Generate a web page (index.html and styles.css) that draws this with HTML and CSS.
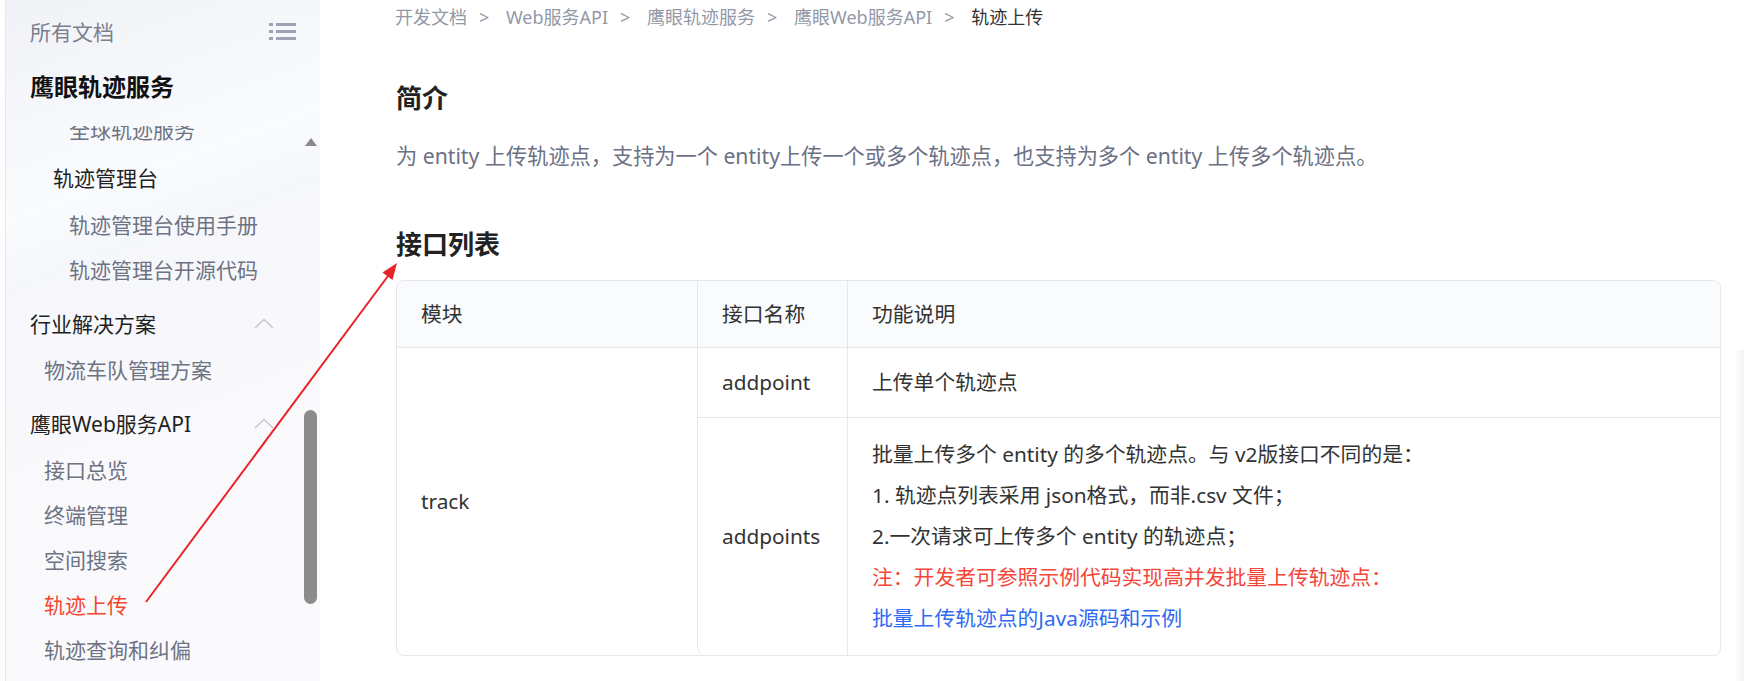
FILE: index.html
```html
<!DOCTYPE html>
<html lang="zh-CN">
<head>
    <meta charset="UTF-8">
    <meta name="viewport" content="width=device-width, initial-scale=1.0">
    <title>轨迹上传 - 鹰眼轨迹服务</title>
    <link rel="stylesheet" href="styles.css">
</head>
<body>

    <div class="page">
        <!-- Left: document tree -->
        <aside class="sidebar">
            <div class="side-head">
                <span>所有文档</span>
                <svg class="list-icon" width="27" height="19" viewBox="0 0 27 19" fill="currentColor">
                    <rect x="0" y="1" width="4" height="3"></rect>
                    <rect x="7" y="1" width="20" height="3"></rect>
                    <rect x="0" y="8" width="4" height="3"></rect>
                    <rect x="7" y="8" width="20" height="3"></rect>
                    <rect x="0" y="15" width="4" height="3"></rect>
                    <rect x="7" y="15" width="20" height="3"></rect>
                </svg>
            </div>
            <div class="side-title">鹰眼轨迹服务</div>

            <div class="side-scroll">
                <ul class="side-list">
                    <li class="leaf deep">全球轨迹服务</li>
                    <li class="sub-title">轨迹管理台</li>
                    <li class="leaf deep">轨迹管理台使用手册</li>
                    <li class="leaf deep">轨迹管理台开源代码</li>
                    <li class="group">
                        <span>行业解决方案</span>
                        <svg class="chevron" width="20" height="11" viewBox="0 0 20 11" fill="none" stroke="currentColor" stroke-width="1.4">
                            <polyline points="1,10 10,1.5 19,10"></polyline>
                        </svg>
                    </li>
                    <li class="leaf">物流车队管理方案</li>
                    <li class="group">
                        <span>鹰眼Web服务API</span>
                        <svg class="chevron" width="20" height="11" viewBox="0 0 20 11" fill="none" stroke="currentColor" stroke-width="1.4">
                            <polyline points="1,10 10,1.5 19,10"></polyline>
                        </svg>
                    </li>
                    <li class="leaf">接口总览</li>
                    <li class="leaf">终端管理</li>
                    <li class="leaf">空间搜索</li>
                    <li class="leaf active">轨迹上传</li>
                    <li class="leaf">轨迹查询和纠偏</li>
                </ul>

                <!-- scrollbar drawn over the list -->
                <span class="scroll-up"></span>
                <span class="scroll-thumb"></span>
            </div>
        </aside>

        <!-- Right: article -->
        <main class="content">
            <nav class="crumbs">
                <a>开发文档</a><span class="sep">&gt;</span>
                <a>Web服务API</a><span class="sep">&gt;</span>
                <a>鹰眼轨迹服务</a><span class="sep">&gt;</span>
                <a>鹰眼Web服务API</a><span class="sep">&gt;</span>
                <span class="current">轨迹上传</span>
            </nav>

            <h2 class="intro-title">简介</h2>
            <p class="intro">为 entity 上传轨迹点，支持为一个 entity上传一个或多个轨迹点，也支持为多个 entity 上传多个轨迹点。</p>

            <h2 class="list-title">接口列表</h2>
            <table class="api-table">
                <thead>
                    <tr>
                        <th class="col-module">模块</th>
                        <th class="col-name">接口名称</th>
                        <th>功能说明</th>
                    </tr>
                </thead>
                <tbody>
                    <tr>
                        <td class="module" rowspan="2">track</td>
                        <td>addpoint</td>
                        <td>上传单个轨迹点</td>
                    </tr>
                    <tr>
                        <td class="first-in-row">addpoints</td>
                        <td class="desc">
                            <p>批量上传多个 entity 的多个轨迹点。与 v2版接口不同的是：</p>
                            <p>1. 轨迹点列表采用 json格式，而非.csv 文件；</p>
                            <p>2.一次请求可上传多个 entity 的轨迹点；</p>
                            <p class="note">注：开发者可参照示例代码实现高并发批量上传轨迹点：</p>
                            <p><a class="link">批量上传轨迹点的Java源码和示例</a></p>
                        </td>
                    </tr>
                </tbody>
            </table>
        </main>
    </div>

    <!-- red annotation arrow drawn on top of the screenshot -->
    <svg class="annot" width="1744" height="681" viewBox="0 0 1744 681">
        <line x1="146" y1="602" x2="388" y2="276" stroke="#e8232b" stroke-width="2"></line>
        <polygon points="397,263 392.5,280 382.5,272.5" fill="#e8232b"></polygon>
    </svg>

</body>
</html>
```

FILE: styles.css
```css
* {
    margin: 0;
    padding: 0;
    box-sizing: border-box;
}

body {
    width: 1744px;
    height: 681px;
    overflow: hidden;
    background-color: #ffffff;
    font-family: "Noto Sans", "Noto Sans CJK SC", sans-serif;
    color: #333333;
    position: relative;
}

body::after {
    content: "";
    position: absolute;
    right: 0;
    top: 350px;
    bottom: 0;
    width: 10px;
    background: linear-gradient(to right, #ffffff, #f2f2f4);
}

.page {
    display: flex;
    height: 100%;
}

/* ---------- sidebar ---------- */

.sidebar {
    width: 315px;
    margin-left: 5px;
    border-left: 1px solid #e6e6ec;
    background: linear-gradient(160deg, #f1f2f7 0%, #fafbfd 28%, #f6f7fb 36%, #f9f9fc 60%, #fafafd 100%);
    display: flex;
    flex-direction: column;
    flex-shrink: 0;
}

.side-head {
    height: 62px;
    display: flex;
    align-items: center;
    justify-content: space-between;
    padding: 0 24px 0 24px;
    font-size: 21px;
    color: #7b8090;
}

.list-icon {
    color: #9ea3b4;
}

.side-title {
    margin-top: 7px;
    padding-left: 24px;
    font-size: 24px;
    line-height: 36px;
    font-weight: bold;
    color: #111111;
}

.side-scroll {
    flex: 1;
    margin-top: 21px;
    overflow: hidden;
    position: relative;
}

.side-list {
    list-style: none;
    margin-top: -18px;
    font-size: 21px;
}

.leaf {
    height: 45px;
    line-height: 45px;
    padding-left: 38px;
    color: #6e7383;
}

.leaf.deep {
    padding-left: 63px;
}

.leaf.active {
    color: #f5452f;
}

.sub-title {
    height: 50px;
    line-height: 50px;
    padding-left: 47px;
    color: #222222;
}

.group {
    height: 50px;
    margin-top: 5px;
    display: flex;
    align-items: center;
    justify-content: space-between;
    padding: 0 46px 0 24px;
    color: #1f1f1f;
}

.chevron {
    color: #c2c6d0;
}

.scroll-up {
    position: absolute;
    top: 12px;
    right: 3px;
    width: 0;
    height: 0;
    border-left: 6.5px solid transparent;
    border-right: 6.5px solid transparent;
    border-bottom: 8px solid #8a8a8a;
}

.scroll-thumb {
    position: absolute;
    top: 284px;
    right: 3px;
    width: 13px;
    height: 194px;
    border-radius: 7px;
    background-color: #8c8c8c;
}

/* ---------- content ---------- */

.content {
    flex: 1;
    padding: 0 23px 0 75px;
}

.crumbs {
    height: 34px;
    line-height: 34px;
    font-size: 18px;
    color: #9398a7;
    white-space: nowrap;
}

.crumbs .sep {
    margin: 0 12px;
}

.crumbs .current {
    color: #333333;
}

.intro-title,
.list-title {
    font-size: 26px;
    line-height: 36px;
    font-weight: bold;
    color: #222222;
    padding-left: 1px;
}

.intro-title {
    margin-top: 46px;
}

.intro {
    margin-top: 22px;
    padding-left: 1px;
    font-size: 21.2px;
    line-height: 36px;
    color: #6b7083;
}

.list-title {
    margin-top: 52px;
}

.api-table {
    margin-top: 18px;
    margin-left: 1px;
    width: 1325px;
    border-collapse: separate;
    border-spacing: 0;
    border: 1px solid #e6e7ec;
    border-radius: 8px;
    font-size: 20.8px;
    color: #333333;
    text-align: left;
}

.api-table th {
    font-weight: normal;
    background-color: #fafbfd;
    padding: 12px 24px;
    line-height: 42px;
    border-bottom: 1px solid #e6e7ec;
    border-left: 1px solid #e6e7ec;
}

.api-table th:first-child {
    border-left: none;
    border-top-left-radius: 8px;
}

.api-table th:last-child {
    border-top-right-radius: 8px;
}

.col-module {
    width: 300px;
}

.col-name {
    width: 150px;
}

.api-table td {
    padding: 14px 24px;
    line-height: 41px;
    border-bottom: 1px solid #e6e7ec;
    border-left: 1px solid #e6e7ec;
    vertical-align: middle;
}

.api-table tbody tr:last-child td {
    border-bottom: none;
}

.api-table td.module {
    border-left: none;
    border-bottom: none;
    border-bottom-left-radius: 8px;
}

.api-table td.first-in-row {
    border-bottom-left-radius: 8px;
}

.api-table td.desc {
    padding-top: 16px;
    padding-bottom: 16px;
}

.note {
    color: #f4473a;
}

.link {
    color: #2f6bf2;
    cursor: pointer;
}

/* ---------- annotation ---------- */

.annot {
    position: absolute;
    left: 0;
    top: 0;
    pointer-events: none;
}
```
